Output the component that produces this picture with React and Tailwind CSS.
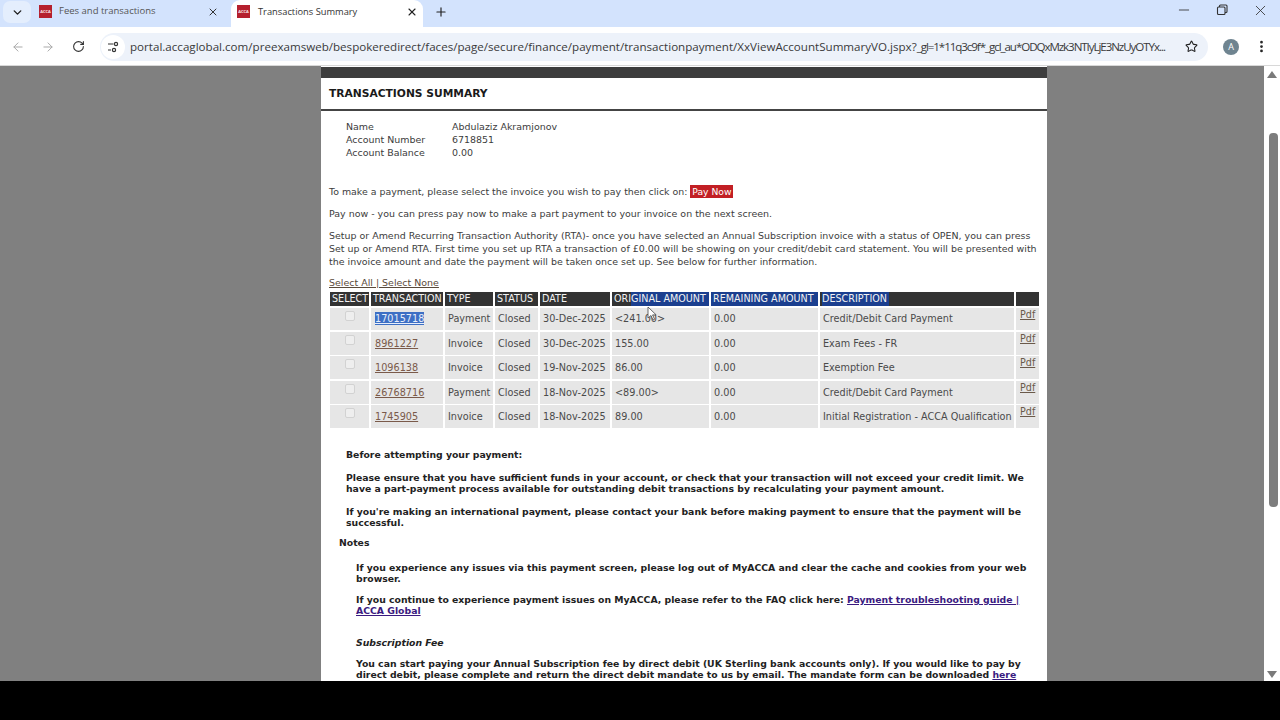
import React from "react";
import { ChevronDown, X, Plus, ArrowLeft, ArrowRight, RotateCw, Star, Minus, EllipsisVertical } from "lucide-react";

const Logo = () => (
  <div className="w-[13px] h-[13px] bg-[#b5202e] flex items-center justify-center overflow-hidden shrink-0">
    <span className="text-[4px] leading-none font-bold text-white/90">ACCA</span>
  </div>
);

const rows = [
  ["17015718", "Payment", "Closed", "30-Dec-2025", "<241.00>", "0.00", "Credit/Debit Card Payment"],
  ["8961227", "Invoice", "Closed", "30-Dec-2025", "155.00", "0.00", "Exam Fees - FR"],
  ["1096138", "Invoice", "Closed", "19-Nov-2025", "86.00", "0.00", "Exemption Fee"],
  ["26768716", "Payment", "Closed", "18-Nov-2025", "<89.00>", "0.00", "Credit/Debit Card Payment"],
  ["1745905", "Invoice", "Closed", "18-Nov-2025", "89.00", "0.00", "Initial Registration - ACCA Qualification"],
];

const Th = ({ children, className = "" }) => (
  <div className={`h-[14px] pl-[2px] text-[#f2f2f2] text-[9.6px] leading-[14px] whitespace-nowrap overflow-hidden ${className}`}>{children}</div>
);
const Td = ({ children, className = "" }) => (
  <div className={`pl-[3px] bg-[#e6e6e6] text-[#4a4a4a] flex items-center whitespace-nowrap overflow-hidden ${className}`}>{children}</div>
);

export default function App() {
  return (
    <div className="w-[1280px] h-[720px] bg-black overflow-hidden flex flex-col text-[#333]" style={{ fontFamily: '"DejaVu Sans", sans-serif' }}>
      {/* tab strip */}
      <div className="h-[27px] bg-[#d3e3fd] flex items-end shrink-0 relative" style={{ fontFamily: '"Open Sans", "Liberation Sans", sans-serif' }}>
        <div className="w-[28px] h-[22px] ml-[3px] mb-[4px] rounded-[7px] bg-[#e4eefd] flex items-center justify-center">
          <ChevronDown size={13} strokeWidth={2.6} className="text-[#1f1f1f]" />
        </div>
        <div className="w-[200px] h-[27px] flex items-center pl-[8px] pr-[12px] pb-[4px]">
          <Logo />
          <span className="ml-[7px] text-[9.5px] text-[#555] flex-1">Fees and transactions</span>
          <X size={12} strokeWidth={2} className="text-[#333]" />
        </div>
        <div className="w-[192px] h-[27px] bg-white rounded-t-[9px] flex items-center pl-[6px] pr-[5px] pb-[4px]">
          <Logo />
          <span className="ml-[8px] text-[9.3px] text-[#333] flex-1">Transactions Summary</span>
          <X size={12} strokeWidth={2.2} className="text-[#222]" />
        </div>
        <div className="w-[35px] h-[27px] pb-[4px] flex items-center justify-center">
          <Plus size={14} strokeWidth={2} className="text-[#222]" />
        </div>
        <div className="flex-1" />
        <div className="flex items-center h-[27px] pb-[7px] pr-[11px] gap-[23px] text-[#333]">
          <Minus size={16} strokeWidth={1.3} />
          <svg width="14" height="14" viewBox="0 0 14 14" fill="none" stroke="#333" strokeWidth="1.1">
            <rect x="2.5" y="4" width="7.5" height="7.5" rx="1" />
            <path d="M4.5 4V3a1 1 0 0 1 1-1H11a1 1 0 0 1 1 1v5.5a1 1 0 0 1-1 1h-1" />
          </svg>
          <X size={17} strokeWidth={1.2} />
        </div>
      </div>

      {/* toolbar */}
      <div className="h-[39px] bg-white flex items-center shrink-0 border-b border-[#d8d8d8] pt-[1px]" style={{ fontFamily: '"Open Sans", "Liberation Sans", sans-serif' }}>
        <ArrowLeft size={14} strokeWidth={1.7} className="ml-[11px] text-[#a9a9a9]" />
        <ArrowRight size={14} strokeWidth={1.7} className="ml-[16px] text-[#a9a9a9]" />
        <RotateCw size={13} strokeWidth={2} className="ml-[17px] text-[#333]" />
        <div className="ml-[15px] w-[1108px] h-[28px] rounded-full bg-[#edf2fa] flex items-center pr-[10px]">
          <div className="w-[24px] h-[24px] ml-[1px] rounded-full bg-white flex items-center justify-center shrink-0">
            <svg width="12" height="12" viewBox="0 0 12 12" fill="none" stroke="#333" strokeWidth="1.2">
              <path d="M1 3h5.5M1 9h3" />
              <circle cx="9" cy="3" r="1.6" />
              <circle cx="7" cy="9" r="1.6" />
            </svg>
          </div>
          <span className="ml-[5px] text-[11.6px] text-[#3a3a3a] whitespace-nowrap overflow-hidden flex-1">portal.accaglobal.com/preexamsweb/bespokeredirect/faces/page/secure/finance/payment/transactionpayment/XxViewAccountSummaryVO.jspx?<span className="tracking-[-1.08px]">_gl=1*11q3c9f*_gcl_au*ODQxMzk3NTIyLjE3NzUyOTYx...</span></span>
          <Star size={13} strokeWidth={2} className="ml-[17px] text-[#222] shrink-0" />
        </div>
        <div className="ml-[15px] w-[16px] h-[16px] rounded-full bg-[#6f8490] text-white text-[9px] flex items-center justify-center shrink-0">A</div>
        <EllipsisVertical size={15} strokeWidth={2.4} className="ml-[15px] text-[#222] shrink-0" />
      </div>

      {/* viewport */}
      <div className="h-[615px] flex shrink-0 overflow-hidden">
        <div className="w-[1264px] bg-[#808080] pl-[321px] overflow-hidden">
          <div className="w-[726px] h-[615px] bg-white overflow-hidden text-[9.46px] leading-[13px] text-[#3c3c3c]">
            <div className="h-[11px] bg-[#3d3d3d] mt-[1px]" />
            <div className="h-[33px] border-b-2 border-[#444] pl-[8px] pt-[9px] text-[10.7px] leading-[14px] font-bold text-[#1a1a1a]">TRANSACTIONS SUMMARY</div>

            <div className="pl-[25px] pt-[9px]">
              <div className="flex"><span className="w-[106px]">Name</span><span>Abdulaziz Akramjonov</span></div>
              <div className="flex"><span className="w-[106px]">Account Number</span><span>6718851</span></div>
              <div className="flex"><span className="w-[106px]">Account Balance</span><span>0.00</span></div>
            </div>

            <div className="pl-[8px] pr-[8px]">
              <div className="mt-[26px] flex items-center h-[13px]">
                <span className="text-[9.42px]">To make a payment, please select the invoice you wish to pay then click on:</span>
                <span className="ml-[3px] h-[13px] w-[43px] bg-[#c21f24] text-white text-[9.2px] leading-[13px] text-center">Pay Now</span>
              </div>
              <p className="mt-[9px]">Pay now - you can press pay now to make a part payment to your invoice on the next screen.</p>
              <p className="mt-[9px]">Setup or Amend Recurring Transaction Authority (RTA)- once you have selected an Annual Subscription invoice with a status of OPEN, you can press Set up or Amend RTA. First time you set up RTA a transaction of £0.00 will be showing on your credit/debit card statement. You will be presented with the invoice amount and date the payment will be taken once set up. See below for further information.</p>
              <div className="mt-[8px] underline text-[#5a4a3a]">Select All | Select None</div>
            </div>

            <div className="ml-[9px] mt-[3px] grid grid-cols-[39px_72px_48px_43px_70px_97px_107px_194px_23px] gap-x-[2px] gap-y-[1.5px] auto-rows-[22.9px] text-[9.7px]" style={{ gridTemplateRows: "14px" }}>
              <Th className="bg-[#333333]">SELECT</Th>
              <Th className="bg-[#333333]">TRANSACTION</Th>
              <Th className="bg-[#333333]">TYPE</Th>
              <Th className="bg-[#333333]">STATUS</Th>
              <Th className="bg-[#333333]">DATE</Th>
              <Th className="bg-[linear-gradient(90deg,#333333_20%,#1b3f8f_20%)]">ORIGINAL AMOUNT</Th>
              <Th className="bg-[#1b3f8f]">REMAINING AMOUNT</Th>
              <Th className="bg-[#333333]"><span className="bg-[#1b3f8f] pr-[2px] inline-block">DESCRIPTION</span></Th>
              <Th className="bg-[#333333]" />
              {rows.map((r, i) => (
                <React.Fragment key={r[0]}>
                  <Td className="justify-center items-start pl-0">
                    <span className="w-[10px] h-[10px] mt-[3px] mr-[3px] rounded-[2px] bg-[#eeeeee] border border-[#d2d2d2]" />
                  </Td>
                  <Td>
                    <span className={i === 0 ? "ml-[1px] underline bg-[#3d6fc4] text-[#e8eefa]" : "ml-[1px] underline text-[#7a5a4a]"}>{r[0]}</span>
                  </Td>
                  {r.slice(1, 6).map((c, j) => <Td key={j}>{c}</Td>)}
                  <Td>{r[6]}</Td>
                  <Td className="items-start"><span className="ml-[1px] underline text-[#6a5a4a] text-[9.6px] leading-[14px]">Pdf</span></Td>
                </React.Fragment>
              ))}
            </div>

            <div className="text-[#222] font-bold pl-[25px] pr-[17px] text-[9.3px] leading-[11.5px]">
              <p className="mt-[20px] leading-[13px]">Before attempting your payment:</p>
              <p className="mt-[11px]">Please ensure that you have sufficient funds in your account, or check that your transaction will not exceed your credit limit. We have a part-payment process available for outstanding debit transactions by recalculating your payment amount.</p>
              <p className="mt-[11px]">If you're making an international payment, please contact your bank before making payment to ensure that the payment will be successful.</p>
              <p className="mt-[7px] -ml-[7px] leading-[14px]">Notes</p>
              <div className="pl-[10px]">
                <p className="mt-[12px]">If you experience any issues via this payment screen, please log out of MyACCA and clear the cache and cookies from your web browser.</p>
                <p className="mt-[9px]">If you continue to experience payment issues on MyACCA, please refer to the FAQ click here: <span className="underline text-[#3a1a80]">Payment troubleshooting guide | ACCA Global</span></p>
                <p className="mt-[19px] italic leading-[14px]">Subscription Fee</p>
                <p className="mt-[8px]">You can start paying your Annual Subscription fee by direct debit (UK Sterling bank accounts only). If you would like to pay by direct debit, please complete and return the direct debit mandate to us by email. The mandate form can be downloaded <span className="underline text-[#3a1a80]">here</span></p>
              </div>
            </div>
          </div>
        </div>

        {/* scrollbar */}
        <div className="w-[16px] bg-white flex flex-col items-center relative">
          <div className="w-0 h-0 mt-[5px] border-x-[5px] border-x-transparent border-b-[7px] border-b-[#7a7a7a]" />
          <div className="w-[9px] h-[374px] mt-[55px] ml-[3px] bg-[#7d7d7d] rounded-sm" />
          <div className="flex-1" />
          <div className="w-0 h-0 mb-[3px] border-x-[5px] border-x-transparent border-t-[7px] border-t-[#7a7a7a]" />
        </div>
      </div>

      {/* mouse pointer */}
      <svg className="absolute left-[647px] top-[306px]" width="10" height="15" viewBox="0 0 10 15">
        <path d="M1 1v11l3-2.5 2 4.5 1.6-.7-2-4.4h3.6z" fill="#fff" stroke="#444" strokeWidth="0.8" />
      </svg>
    </div>
  );
}
